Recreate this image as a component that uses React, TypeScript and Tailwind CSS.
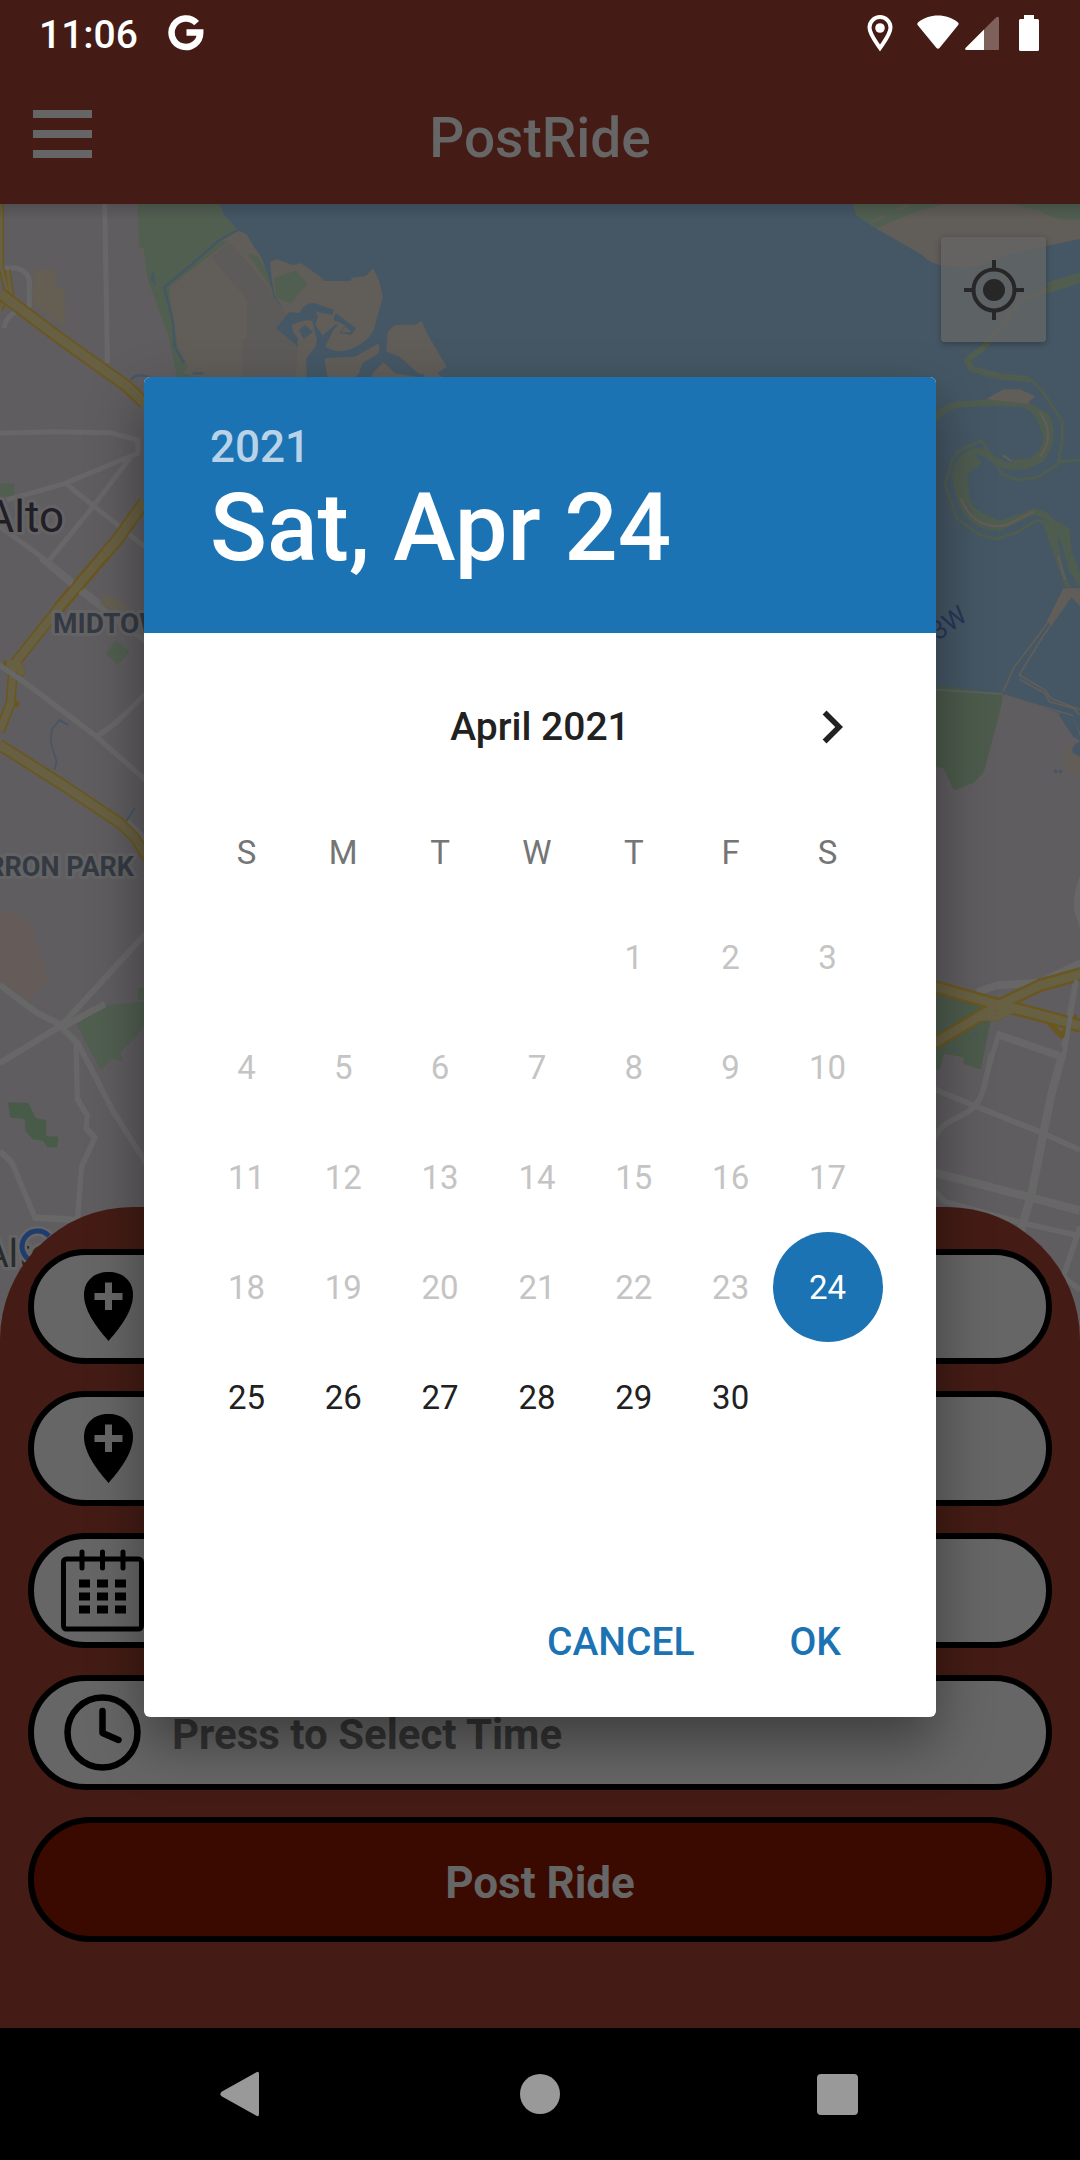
import React from "react";

const WEEKDAYS = [
  { short: "S", long: "Sunday" },
  { short: "M", long: "Monday" },
  { short: "T", long: "Tuesday" },
  { short: "W", long: "Wednesday" },
  { short: "T", long: "Thursday" },
  { short: "F", long: "Friday" },
  { short: "S", long: "Saturday" },
];

const FIRST_WEEKDAY = 4;
const DAYS_IN_MONTH = 30;
const SELECTED_DAY = 24;

const WEEKS: (number | null)[][] = Array.from({ length: 5 }, (_, week) =>
  Array.from({ length: 7 }, (_, weekday) => {
    const day = week * 7 + weekday - FIRST_WEEKDAY + 1;
    return day >= 1 && day <= DAYS_IN_MONTH ? day : null;
  }),
);

function StatusBar() {
  return (
    <div className="flex h-[66px] items-center justify-between pr-[41px] pl-[39px] text-white">
      <div className="flex items-center gap-[30px]">
        <span className="pt-1 text-[39px] leading-none font-medium">11:06</span>
        <svg viewBox="0 0 36 36" className="size-9" fill="none" stroke="currentColor" strokeWidth="6.5" aria-label="Google">
          <path d="M28.6 8.2A14.3 14.3 0 1 0 32.2 17.6H18.5" />
        </svg>
      </div>
      <div className="flex items-center">
        <svg viewBox="0 0 26 36" className="mr-6 h-9 w-[26px]" aria-label="Location in use">
          <path d="M13 33C8 25.500 2.500 19 2.500 12.500a10.500 10.500 0 0 1 21 0C23.500 19 18 25.500 13 33Z" fill="none" stroke="white" strokeWidth="4" />
          <circle cx="13" cy="13" r="4.800" fill="white" />
        </svg>
        <svg viewBox="0 0 42 36" className="mr-1.5 h-9 w-[42px]" fill="white" aria-label="Wi-Fi">
          <path d="M1 7.500C12-1.800 30-1.800 41 7.500q1.200 1.200.2 2.500L22.500 33q-1.500 1.600-3 0L.6 10Q-.2 8.500 1 7.500Z" />
        </svg>
        <svg viewBox="0 0 34 36" className="mr-5 h-9 w-[34px]" aria-label="Mobile signal">
          <path d="M31 2.500q3-2 3 1V34q0 1-1 1H19V14.500Z" fill="#7f615b" />
          <path d="M19 14.500V35H1.500Q-.5 34.500.5 33Z" fill="white" />
        </svg>
        <svg viewBox="0 0 20 36" className="h-9 w-5" fill="white" aria-label="Battery full">
          <path d="M5 0h10v4h3.500Q20 4 20 5.500v29q0 1.500-1.500 1.500h-17Q0 36 0 34.500v-29Q0 4 1.500 4H5Z" />
        </svg>
      </div>
    </div>
  );
}

function AppBar() {
  return (
    <div className="grid h-[138px] grid-cols-[1fr_auto_1fr] items-center px-[33px]">
      <button type="button" aria-label="Open menu" className="mb-[3px] flex h-12 w-[59px] flex-col justify-between">
        <span className="h-2 w-full bg-[#666666]" />
        <span className="h-2 w-full bg-[#666666]" />
        <span className="h-2 w-full bg-[#666666]" />
      </button>
      <h1 className="pt-1.5 text-[55px] leading-none font-medium text-[#666666]">PostRide</h1>
    </div>
  );
}

function MapDrawing() {
  return (
    <svg
      viewBox="0 204 1080 1136"
      preserveAspectRatio="xMidYMin slice"
      className="absolute inset-0 h-full w-full"
      fill="none"
      strokeLinejoin="round"
      aria-hidden="true"
    >
      <rect x="0" y="204" width="1080" height="1136" fill="#605d60" />
      {/* bay */}
      <path d="M219 204H1080V750H930V500H500L250 400Z" fill="#455765" />

      {/* north-west shore */}
      <g transform="translate(0 200) scale(.3444 .3333)">
        <path d="M400 0H630L650 45 690 90 716 103 740 145 765 175 785 185 803 177 850 195 875 190 930 230 942 243H1018L1022 233 1062 228 1083 205 1100 240 1112 290 1085 390C1060 440 990 470 942 445L975 375 890 330 850 340 820 320 790 500 780 560H530L400 140Z" fill="#615d59" />
        <path d="M820 320L900 330 920 420 900 560H780Z" fill="#615d59" />
        <path d="M640 150L668 130 730 200 820 320 865 440 858 530H705V420L718 410V300L615 172Z" fill="#5c5b59" />
        <path d="M400 0H634L650 45 690 90 640 122 665 122 490 262 515 440 545 500 530 520 585 535H515L490 410 428 235 418 145H405Z" fill="#515f51" />
        <path d="M718 160L750 170 785 230 788 265Z" fill="#515f51" />
        <path d="M690 90L635 122 560 190 477 262 503 370 507 440 535 490" stroke="#455765" strokeWidth="7" />
        <path d="M445 210L437 235 453 260Z" fill="#455765" />
        <path d="M720 100L768 172 785 185 788 230 798 288 818 320 795 290 780 230 762 180Z" fill="#455765" />
        <path d="M795 235L858 212 892 250 845 310 802 292Z" fill="#515f51" />
        <path d="M840 335L868 340Q885 308 910 308L970 330 965 345 920 335 915 370Q900 350 848 375L850 395 865 415V440L802 385Z" fill="#455765" />
        <path d="M925 345L975 350 978 375 940 410 915 375Z" fill="#615d59" />
        <path d="M868 390L885 375 908 395 882 418Z" fill="#455765" />
        <path d="M975 340L1034 385 1020 405 985 400 1002 375 968 360Z" fill="#455765" />
        <path d="M990 398L1002 378 1020 395Z" fill="#615d59" />
        <path d="M978 375L940 408" stroke="#455765" strokeWidth="7" />
        <path d="M938 410L942 440 985 458 1040 450 1100 430 1105 460 1050 490 1020 560H890V475Z" fill="#455765" />
        <path d="M942 475L1030 470 1100 430 1102 460 1052 490 1042 520 1010 560H955Z" fill="#615d59" />
        <path d="M1122 455L1125 400Q1135 378 1155 374L1208 374 1224 362 1240 400 1268 450 1297 500 1270 520 1300 545H1070L1085 515 1115 485 1150 515 1220 525 1160 470Z" fill="#615d59" />
        <path d="M1100 455L1170 490M1105 460L1050 520V540M1115 480L1150 515 1230 528" stroke="#455765" strokeWidth="11" />
        <path d="M380 538Q405 515 440 535M560 520H590" stroke="#455765" strokeWidth="7" />
        <path d="M100 210H162L165 260 188 272V385L95 310Z" fill="#655f53" />
        <path d="M0 850H42V890H0Z" fill="#515f51" />
        <path d="M304 12L312 490M0 205H50Q90 215 85 265V320Q15 340 12 385M0 700L155 695 320 698 400 720V760L190 850 20 900M190 850L420 1040M380 770L270 920 140 1085M0 980L140 1085 290 1210" stroke="#666766" strokeWidth="15" />
        <path d="M3 0V200L20 270 0 330M22 210L33 290" stroke="#6a5720" strokeWidth="18" />
        <path d="M3 0V200L20 270 0 330M22 210L33 290" stroke="#686043" strokeWidth="10" />
        <path d="M0 280L180 420 370 560 420 610M420 905L340 1020 170 1225" stroke="#6a5720" strokeWidth="38" />
        <path d="M0 280L180 420 370 560 420 610M420 905L340 1020 170 1225" stroke="#686043" strokeWidth="27" />
      </g>

      {/* west neighbourhoods */}
      <g transform="translate(0 560) scale(.3333 .421)">
        <path d="M318 222L348 190 388 218 354 250ZM228 1102L320 1058 440 1048V1100L400 1140 362 1168 368 1190 335 1185 302 1210ZM412 1018H440V1045H415Z" fill="#515f51" />
        <path d="M24 1288L85 1290 108 1326 139 1330V1368L175 1370 172 1395H142L130 1380 98 1376 76 1355 74 1328 30 1324Z" fill="#485b49" />
        <path d="M0 836Q60 830 95 870L143 1000 90 1048 0 1000Z" fill="#655b58" />
        <path d="M315 80L380 105V130L300 105Z" fill="#655f53" />
        <path d="M120 -5L240 75 440 195M0 250L90 300 290 420 440 525M290 420L350 385 440 315M380 620L440 665" stroke="#666766" strokeWidth="14" />
        <path d="M0 1010L110 1075 185 1105 440 885M185 1105L0 1195M185 1110L235 1150 340 1310 440 1435M228 1150L232 1280 262 1320 258 1350 285 1372 245 1440 232 1570M0 1405L35 1430 105 1562 235 1568M315 1055L185 1110" stroke="#666766" strokeWidth="16" />
        <path d="M205 392L178 380 155 403 152 432 170 480 163 498M405 588L380 620" stroke="#455765" strokeWidth="5" />
        <path d="M10 245H40Q72 245 66 275M35 342H58" stroke="#6a5720" strokeWidth="14" />
        <path d="M315 -15L170 120 40 250 32 340 0 405M0 440L190 535 360 625 405 660 440 705" stroke="#6a5720" strokeWidth="30" />
        <path d="M315 -15L170 120 40 250 32 340 0 405M0 440L190 535 360 625 405 660 440 705M20 248H40Q66 250 62 272" stroke="#686043" strokeWidth="21" />
        <path d="M-5 248L100 305" stroke="#666766" strokeWidth="13" />
      </g>

      {/* north-east shore */}
      <g transform="translate(540 0) scale(.3444 .3333)">
        <path d="M908 600L918 645 975 685 1050 730 1110 765Q1135 800 1220 802 1290 805 1350 765L1568 717V600Z" fill="#615d59" />
        <path d="M908 600L918 645 975 685 1080 640 1180 610 1360 610 1450 632Q1520 670 1568 658V600Z" fill="#515f51" />
        <path d="M962 667L1006 645M1032 632L1072 614" stroke="#615d59" strokeWidth="5" />
        <path d="M1568 840L1470 872 1400 900 1345 970 1285 1045 1240 1080 1255 1108 1340 1130 1420 1138" stroke="#515d4f" strokeWidth="18" />
        <path d="M1568 825L1470 855" stroke="#515d4f" strokeWidth="14" />
      </g>

      {/* slough and salt ponds */}
      <g transform="translate(930 370) scale(.3333)">
        <path d="M0 960L215 972 390 1030 450 1115V1400H0Z" fill="#605d60" />
        <path d="M0 945L218 968Q218 1000 200 1060L165 1195Q155 1220 130 1238L72 1262 40 1195 0 1188Z" fill="#4c5b4c" />
        <path d="M125 0L215 20 305 32Q340 60 365 105L397 155V210L385 275 450 270M385 282L320 322 265 330 215 312 155 212 95 238Q65 260 62 285L45 345 80 445 150 495 200 507 260 487 320 452Q360 450 375 510" stroke="#4f5c50" strokeWidth="9" />
        <path d="M0 165Q30 115 85 103L200 97 285 102Q330 125 350 180T325 255Q285 305 215 282L165 250Q125 230 95 270T85 370L105 420Q150 480 210 472L310 425Q360 430 395 500T450 645" stroke="#4f5c50" strokeWidth="20" />
        <path d="M75 350Q65 270 125 240L155 280 112 315 120 390 138 418 208 452 275 428 210 485 155 470ZM300 100L355 130Q395 200 340 275L285 300 240 270 320 262 342 205ZM340 465L375 460 400 600 425 655 405 650ZM380 450L420 478 428 580 450 610V650L415 600Z" fill="#4f5c50" />
        <path d="M168 88L220 58 270 58 315 78 292 102Z" fill="#615d59" />
        <path d="M328 125Q380 195 330 260M218 255L245 275M92 385Q135 485 230 465L310 425M385 560L405 630" stroke="#615d59" strokeWidth="7" />
        <path d="M422 665L330 790 250 895 220 965M422 680L335 805 268 915 345 960 362 985 450 1020M268 928L345 970 358 995 430 1015 450 1035M225 975L300 1000 425 1035 450 1095" stroke="#615d59" strokeWidth="5" />
        <path d="M400 655H450V708L424 682 365 765 350 755Z" fill="#615d59" />
        <path d="M385 1032L430 1040 450 1100V1110L430 1102ZM450 1115Q425 1120 428 1150L450 1160ZM105 1050L120 1075 112 1060Z" fill="#455765" />
        <path d="M415 1120L428 1150 450 1160V1220L400 1200Z" fill="#625d56" />
        <path d="M372 1204H382M387 1204H396" stroke="#455765" strokeWidth="10" />
        <path d="M0 958L218 972" stroke="#5c6066" strokeWidth="5" />
      </g>

      {/* east freeways */}
      <g transform="translate(930 340) scale(.3333 .5612)">
        <path d="M0 1160L190 1190 152 1300 102 1290 100 1278 42 1272 30 1300 0 1300Z" fill="#4c5b4c" />
        <path d="M450 955Q430 980 432 1015L450 1050Z" fill="#666766" />
        <path d="M70 1265H85M130 1236H142" stroke="#455765" strokeWidth="5" />
        <path d="M140 1162L200 1150 330 1145 450 1110M440 1130L400 1260" stroke="#666766" strokeWidth="14" />
        <path d="M150 1208H200L250 1192M355 1215L395 1240 440 1205" stroke="#6a5720" strokeWidth="12" />
        <path d="M0 1150L190 1182 300 1198 450 1222M0 1258L190 1190 330 1150 450 1130" stroke="#6a5720" strokeWidth="25" />
        <path d="M0 1150L190 1182 300 1198 450 1222M0 1258L190 1190 330 1150 450 1130M150 1205H200L250 1190" stroke="#686043" strokeWidth="16" />
        <path d="M400 1278L205 1238 170 1310M440 1140L400 1280" stroke="#666766" strokeWidth="14" />
      </g>

      {/* east street grid */}
      <g transform="translate(920 1060) scale(.3333)" stroke="#666766">
        <path d="M30 82L170 140 370 220 480 270M215 -20L190 90Q175 135 145 155L80 190Q45 215 35 260M40 390L75 425 310 490 480 528M480 500L430 650 480 690" strokeWidth="17" />
        <path d="M30 335L200 378 330 412 480 452M425 -10L395 100 370 220 335 400 300 520" strokeWidth="25" />
      </g>

      <g fontFamily="Roboto, sans-serif" strokeWidth="6" paintOrder="stroke">
        <text x="64" y="532" fontSize="44" fill="#211e27" stroke="#656465" textAnchor="end">Alto</text>
        <text x="53" y="633" fontSize="28" fontWeight="700" fill="#343a44" stroke="#656465">MIDTOWN</text>
        <text x="134" y="876" fontSize="27" fontWeight="700" fill="#343a44" stroke="#656465" textAnchor="end">BARRON PARK</text>
        <text x="-16" y="1267" fontSize="38" fill="#2a2b2d" stroke="#656465">Alto</text>
        <text x="938" y="641" fontSize="26" fill="#26385a" transform="rotate(-35 938 641)">3W</text>
      </g>
      <path d="M49 1236A15.500 15.500 0 1 0 53 1248H39" stroke="#666666" strokeWidth="10" />
      <path d="M49 1236A15.500 15.500 0 1 0 53 1248H39" stroke="#1f3c6e" strokeWidth="5" />
    </svg>
  );
}

function MapView() {
  return (
    <section aria-label="Map" className="relative min-h-[1136px] flex-1 overflow-hidden">
      <MapDrawing />
      <div className="absolute inset-x-0 top-0 h-4 bg-linear-to-b from-black/15 to-transparent" />
      <button
        type="button"
        aria-label="My location"
        className="absolute top-[33px] right-[34px] flex size-[105px] items-center justify-center rounded bg-[#666666]/75 shadow-[0_2px_6px_rgba(0,0,0,0.3)]"
      >
        <svg viewBox="0 0 60 60" className="size-[60px]" fill="none" stroke="#272727" strokeWidth="4" aria-hidden="true">
          <circle cx="30" cy="30" r="20.500" />
          <circle cx="30" cy="30" r="11" fill="#272727" stroke="none" />
          <path d="M30 0v8M30 52v8M0 30h8M52 30h8" />
        </svg>
      </button>
    </section>
  );
}

function PinIcon() {
  return (
    <svg viewBox="0 0 83 83" className="size-[83px] shrink-0" aria-hidden="true">
      <path d="M41.500 76C32 65 17 47 17 30C17 15 28 7 41.500 7S66 15 66 30C66 47 51 65 41.500 76Z" fill="black" />
      <path d="M41.500 17.500v27.500M27.500 31.500h28" stroke="#666666" strokeWidth="7" />
    </svg>
  );
}

function CalendarIcon() {
  return (
    <svg viewBox="0 0 83 83" className="size-[83px] shrink-0" fill="none" stroke="black" strokeWidth="5" aria-hidden="true">
      <rect x="2.500" y="10" width="78" height="70" rx="3" />
      <path d="M21 3v16M41.500 3v16M62 3v16" strokeLinecap="round" />
      <path d="M18 34.500h11M36 34.500h11M54 34.500h11M18 47.500h11M36 47.500h11M54 47.500h11M18 60.500h11M36 60.500h11M54 60.500h11" strokeWidth="8" />
    </svg>
  );
}

function ClockIcon() {
  return (
    <svg viewBox="0 0 83 83" className="size-[83px] shrink-0" fill="none" stroke="black" strokeWidth="6.500" aria-hidden="true">
      <circle cx="41.500" cy="41.500" r="35" />
      <path d="M41.500 20v22l16 7" strokeLinecap="round" strokeLinejoin="round" />
    </svg>
  );
}

const FIELD =
  "flex h-[115px] w-full items-center overflow-hidden rounded-full border-6 border-black bg-[#666666] pl-[27px]";

function LocationField({ label }: { label: string }) {
  return (
    <label className={FIELD}>
      <span className="ml-1.5">
        <PinIcon />
      </span>
      <input type="text" aria-label={label} className="ml-7 h-full min-w-0 flex-1 text-[42px] font-bold outline-none" />
    </label>
  );
}

function RideForm() {
  return (
    <form className="relative -mt-[133px] flex flex-col gap-[27px] rounded-t-[133px] bg-[#441c15] px-7 pt-[42px] pb-[86px]">
      <LocationField label="Start location" />
      <LocationField label="Destination" />
      <button type="button" aria-label="Select date" className={FIELD}>
        <CalendarIcon />
      </button>
      <button type="button" className={FIELD}>
        <ClockIcon />
        <span className="ml-7 pt-1 text-[42px] leading-none font-bold text-[#333333]">Press to Select Time</span>
      </button>
      <button
        type="submit"
        className="h-[125px] w-full rounded-full border-6 border-black bg-[#3a0a00] pt-1.5 text-[44px] leading-none font-bold text-[#666666]"
      >
        Post Ride
      </button>
    </form>
  );
}

function NavigationBar() {
  return (
    <nav className="flex h-[132px] items-center justify-center bg-black">
      <button type="button" aria-label="Back" className="flex w-[297px] justify-center">
        <svg viewBox="0 0 66 66" className="size-[66px]" fill="#999999" aria-hidden="true">
          <path d="M46 11.500Q49 9.500 49 13V53Q49 56.500 46 54.500L12 35.500Q8.500 33 12 30.500Z" />
        </svg>
      </button>
      <button type="button" aria-label="Home" className="flex w-[297px] justify-center">
        <span className="size-10 rounded-full bg-[#999999]" />
      </button>
      <button type="button" aria-label="Recent apps" className="flex w-[297px] justify-center">
        <span className="size-[41px] rounded bg-[#999999]" />
      </button>
    </nav>
  );
}

function DayCell({ day }: { day: number | null }) {
  if (day === null) {
    return <td className="p-0" />;
  }
  if (day === SELECTED_DAY) {
    return (
      <td className="p-0" aria-selected="true">
        <button type="button" className="-mx-[7px] size-[110px] rounded-full bg-[#1c73b4] text-white">
          {day}
        </button>
      </td>
    );
  }
  return (
    <td className="p-0">
      <button
        type="button"
        disabled={day < SELECTED_DAY}
        className="h-[110px] w-full text-[#212121] disabled:text-[#c4c4c4]"
      >
        {day}
      </button>
    </td>
  );
}

function DatePickerDialog() {
  return (
    <div className="absolute inset-0 flex items-center justify-center px-36 pt-[66px] pb-[132px]">
      <div
        role="dialog"
        aria-label="Select date"
        className="flex w-full max-w-[792px] flex-col overflow-hidden rounded-md bg-white shadow-[0_24px_56px_rgba(0,0,0,0.4)]"
      >
        <header className="flex h-64 flex-col items-start bg-[#1c73b4] px-[66px] pt-11">
          <button type="button" className="text-[44px] leading-[52px] font-medium text-white/70">
            2021
          </button>
          <h2 className="text-[94px] leading-[110px] font-medium text-white">Sat, Apr 24</h2>
        </header>

        <div className="grid h-[188px] grid-cols-[1fr_auto_1fr] items-center px-[71px]">
          <h3 className="col-start-2 text-[39px] leading-none font-medium text-[#212121]">April 2021</h3>
          <button type="button" aria-label="Next month" className="size-[66px] justify-self-end">
            <svg viewBox="0 0 24 24" className="size-[66px]" fill="#212121" aria-hidden="true">
              <path d="M10 6 8.590 7.410 13.170 12l-4.580 4.590L10 18l6-6z" />
            </svg>
          </button>
        </div>

        <div className="pr-[60px] pl-[54px]">
          <table className="w-full table-fixed border-collapse text-center text-[33px] leading-none">
            <thead>
              <tr>
                {WEEKDAYS.map((weekday) => (
                  <th key={weekday.long} abbr={weekday.long} scope="col" className="h-[81px] p-0 pb-[18px] font-normal text-[#757575]">
                    {weekday.short}
                  </th>
                ))}
              </tr>
            </thead>
            <tbody>
              {WEEKS.map((week, index) => (
                <tr key={index} className="h-[110px]">
                  {week.map((day, weekday) => (
                    <DayCell key={weekday} day={day} />
                  ))}
                </tr>
              ))}
            </tbody>
          </table>
        </div>

        <div className="mt-[115px] flex h-[150px] items-center justify-end gap-[95px] pr-[95px] text-[39px] leading-none font-medium text-[#1c73b4]">
          <button type="button">CANCEL</button>
          <button type="button">OK</button>
        </div>
      </div>
    </div>
  );
}

export default function App() {
  return (
    <div className="relative flex min-h-screen flex-col bg-[#441c15] font-[Roboto,sans-serif]">
      <header>
        <StatusBar />
        <AppBar />
      </header>
      <main className="flex flex-1 flex-col">
        <MapView />
        <RideForm />
      </main>
      <DatePickerDialog />
      <NavigationBar />
    </div>
  );
}
